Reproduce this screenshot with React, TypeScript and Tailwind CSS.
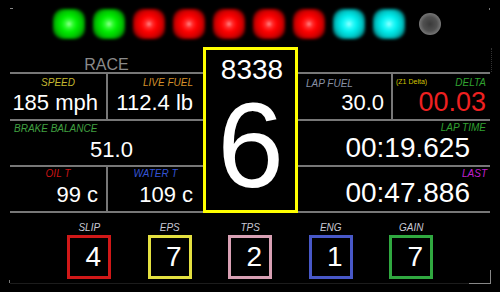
const leds = [
    'bg-[radial-gradient(circle,#f0fff0_0%,#50ff50_10%,#00f000_35%,#00c400_60%,#005a00_85%,transparent_100%)]',
    'bg-[radial-gradient(circle,#f0fff0_0%,#50ff50_10%,#00f000_35%,#00c400_60%,#005a00_85%,transparent_100%)]',
    'bg-[radial-gradient(circle,#fff0f0_0%,#ff4040_10%,#ff0000_35%,#d40000_60%,#600000_85%,transparent_100%)]',
    'bg-[radial-gradient(circle,#fff0f0_0%,#ff4040_10%,#ff0000_35%,#d40000_60%,#600000_85%,transparent_100%)]',
    'bg-[radial-gradient(circle,#fff0f0_0%,#ff4040_10%,#ff0000_35%,#d40000_60%,#600000_85%,transparent_100%)]',
    'bg-[radial-gradient(circle,#fff0f0_0%,#ff4040_10%,#ff0000_35%,#d40000_60%,#600000_85%,transparent_100%)]',
    'bg-[radial-gradient(circle,#fff0f0_0%,#ff4040_10%,#ff0000_35%,#d40000_60%,#600000_85%,transparent_100%)]',
    'bg-[radial-gradient(circle,#f0ffff_0%,#50ffff_10%,#00f0f0_35%,#00c4c4_60%,#005a5a_85%,transparent_100%)]',
    'bg-[radial-gradient(circle,#f0ffff_0%,#50ffff_10%,#00f0f0_35%,#00c4c4_60%,#005a5a_85%,transparent_100%)]',
]

const settings = [
    { label: 'SLIP', value: '4', box: 'border-[#d01818]' },
    { label: 'EPS', value: '7', box: 'border-[#e4e040]' },
    { label: 'TPS', value: '2', box: 'border-[#d8a0b4]' },
    { label: 'ENG', value: '1', box: 'border-[#4858c8]' },
    { label: 'GAIN', value: '7', box: 'border-[#30a840]' },
]

export default function App() {
    return (
        <div className="relative h-[292px] w-[500px] overflow-hidden bg-black font-['Liberation_Sans',Arial,sans-serif] text-white">

            {/* Shift lights */}
            <div className="flex h-[47px] items-center gap-[8px] pl-[53px]">
                {leds.map((bg, i) => (
                    <div key={i} className={`h-[30px] w-[32px] rounded-[10px] blur-[1.5px] ${bg}`} />
                ))}
                <div className="ml-[6px] h-[22px] w-[22px] rounded-full bg-[radial-gradient(circle,#3a3a3a_0%,#505050_45%,#858585_80%,#6a6a6a_100%)] blur-[0.5px]" />
            </div>

            {/* Main */}
            <div className="flex pl-[10px]">

                {/* Left panel */}
                <div className="flex w-[193px] flex-col">
                    <div className="h-[25px] pt-[10px] text-center text-[16px] leading-none text-[#8a8a8a]">
                        RACE
                    </div>

                    <div className="flex h-[47px] border-t-2 border-[#777]">
                        <div className="flex w-[98px] flex-col border-r-2 border-[#777] pt-[4px]">
                            <div className="text-center text-[10px] italic leading-none text-[#c4b830]">SPEED</div>
                            <div className="mt-[4px] pr-[8px] text-right text-[22px] leading-none">185 mph</div>
                        </div>
                        <div className="flex flex-1 flex-col pt-[4px] pr-[10px] text-right">
                            <div className="text-[10px] italic leading-none text-[#d4902a]">LIVE FUEL</div>
                            <div className="mt-[4px] text-[22px] leading-none">112.4 lb</div>
                        </div>
                    </div>

                    <div className="flex h-[46px] flex-col border-t-2 border-[#777] pt-[3px]">
                        <div className="pl-[4px] text-[10px] italic leading-none text-[#40a040]">BRAKE BALANCE</div>
                        <div className="mt-[5px] pl-[10px] text-center text-[22px] leading-none">51.0</div>
                    </div>

                    <div className="flex h-[48px] border-y-2 border-[#777]">
                        <div className="flex w-[98px] flex-col border-r-2 border-[#777] pt-[2px]">
                            <div className="text-center text-[10px] italic leading-none text-[#c81414]">OIL T</div>
                            <div className="mt-[5px] pr-[8px] text-right text-[22px] leading-none">99 c</div>
                        </div>
                        <div className="flex flex-1 flex-col pt-[2px]">
                            <div className="text-center text-[10px] italic leading-none text-[#3454d4]">WATER T</div>
                            <div className="mt-[5px] pr-[10px] text-right text-[22px] leading-none">109 c</div>
                        </div>
                    </div>
                </div>

                {/* Gear */}
                <div className="flex h-[166px] w-[95px] flex-col items-center border-[3px] border-[#ffff00] pt-[6px]">
                    <div className="pl-[3px] text-[28px] leading-none">8338</div>
                    <div className="mt-[1px] text-[120px] leading-none">6</div>
                </div>

                {/* Right panel */}
                <div className="flex w-[192px] flex-col">
                    <div className="h-[25px]" />

                    <div className="flex h-[47px] border-t-2 border-[#777]">
                        <div className="flex w-[95px] flex-col border-r-2 border-[#777] pt-[5px]">
                            <div className="pl-[8px] text-[10px] italic leading-none text-[#8890a4]">LAP FUEL</div>
                            <div className="mt-[3px] pr-[7px] text-right text-[22px] leading-none">30.0</div>
                        </div>
                        <div className="flex flex-1 flex-col pt-[4px] pr-[4px]">
                            <div className="flex items-start justify-between">
                                <span className="pl-[3px] text-[7px] leading-none text-[#d4c400]">(Z1 Delta)</span>
                                <span className="text-[10px] italic leading-none text-[#30a030]">DELTA</span>
                            </div>
                            <div className="mt-[1px] text-right text-[27px] leading-none text-[#ee2020]">00.03</div>
                        </div>
                    </div>

                    <div className="flex h-[46px] flex-col border-t-2 border-[#777] pt-[2px] text-right">
                        <div className="pr-[4px] text-[10px] italic leading-none text-[#30a030]">LAP TIME</div>
                        <div className="mt-[1px] pr-[20px] text-[28px] leading-none">00:19.625</div>
                    </div>

                    <div className="flex h-[48px] flex-col border-y-2 border-[#777] pt-[2px] text-right">
                        <div className="pr-[3px] text-[10px] italic leading-none text-[#c020d0]">LAST</div>
                        <div className="pr-[20px] text-[28px] leading-none">00:47.886</div>
                    </div>
                </div>
            </div>

            {/* Settings */}
            <div className="flex pl-[49px] pt-[10px]">
                {settings.map((s) => (
                    <div key={s.label} className="flex w-[80.5px] flex-col items-center">
                        <div className="text-[10px] italic leading-none text-[#c8c8d4]">{s.label}</div>
                        <div className={`mt-[2px] flex h-[44px] w-[44px] items-center justify-center border-[3px] pl-2 text-[28px] leading-none ${s.box}`}>
                            {s.value}
                        </div>
                    </div>
                ))}
            </div>

            {/* frame corners */}
            <div className="absolute left-[10px] top-[8px] h-px w-[3px] bg-[#888]" />
            <div className="absolute left-[489px] top-[8px] h-[2px] w-px bg-[#777]" />
            <div className="absolute left-[491px] top-[48px] h-[24px] border-l border-dotted border-[#333]" />
            <div className="absolute left-[10px] top-[283px] h-px w-[480px] bg-[#1c1c1c]" />
            <div className="absolute left-[9px] top-[280px] h-[3px] w-px bg-[#777]" />
            <div className="absolute left-[469px] top-[270px] h-[14px] w-[22px] border-b border-r border-[#888]" />
        </div>
    )
}
